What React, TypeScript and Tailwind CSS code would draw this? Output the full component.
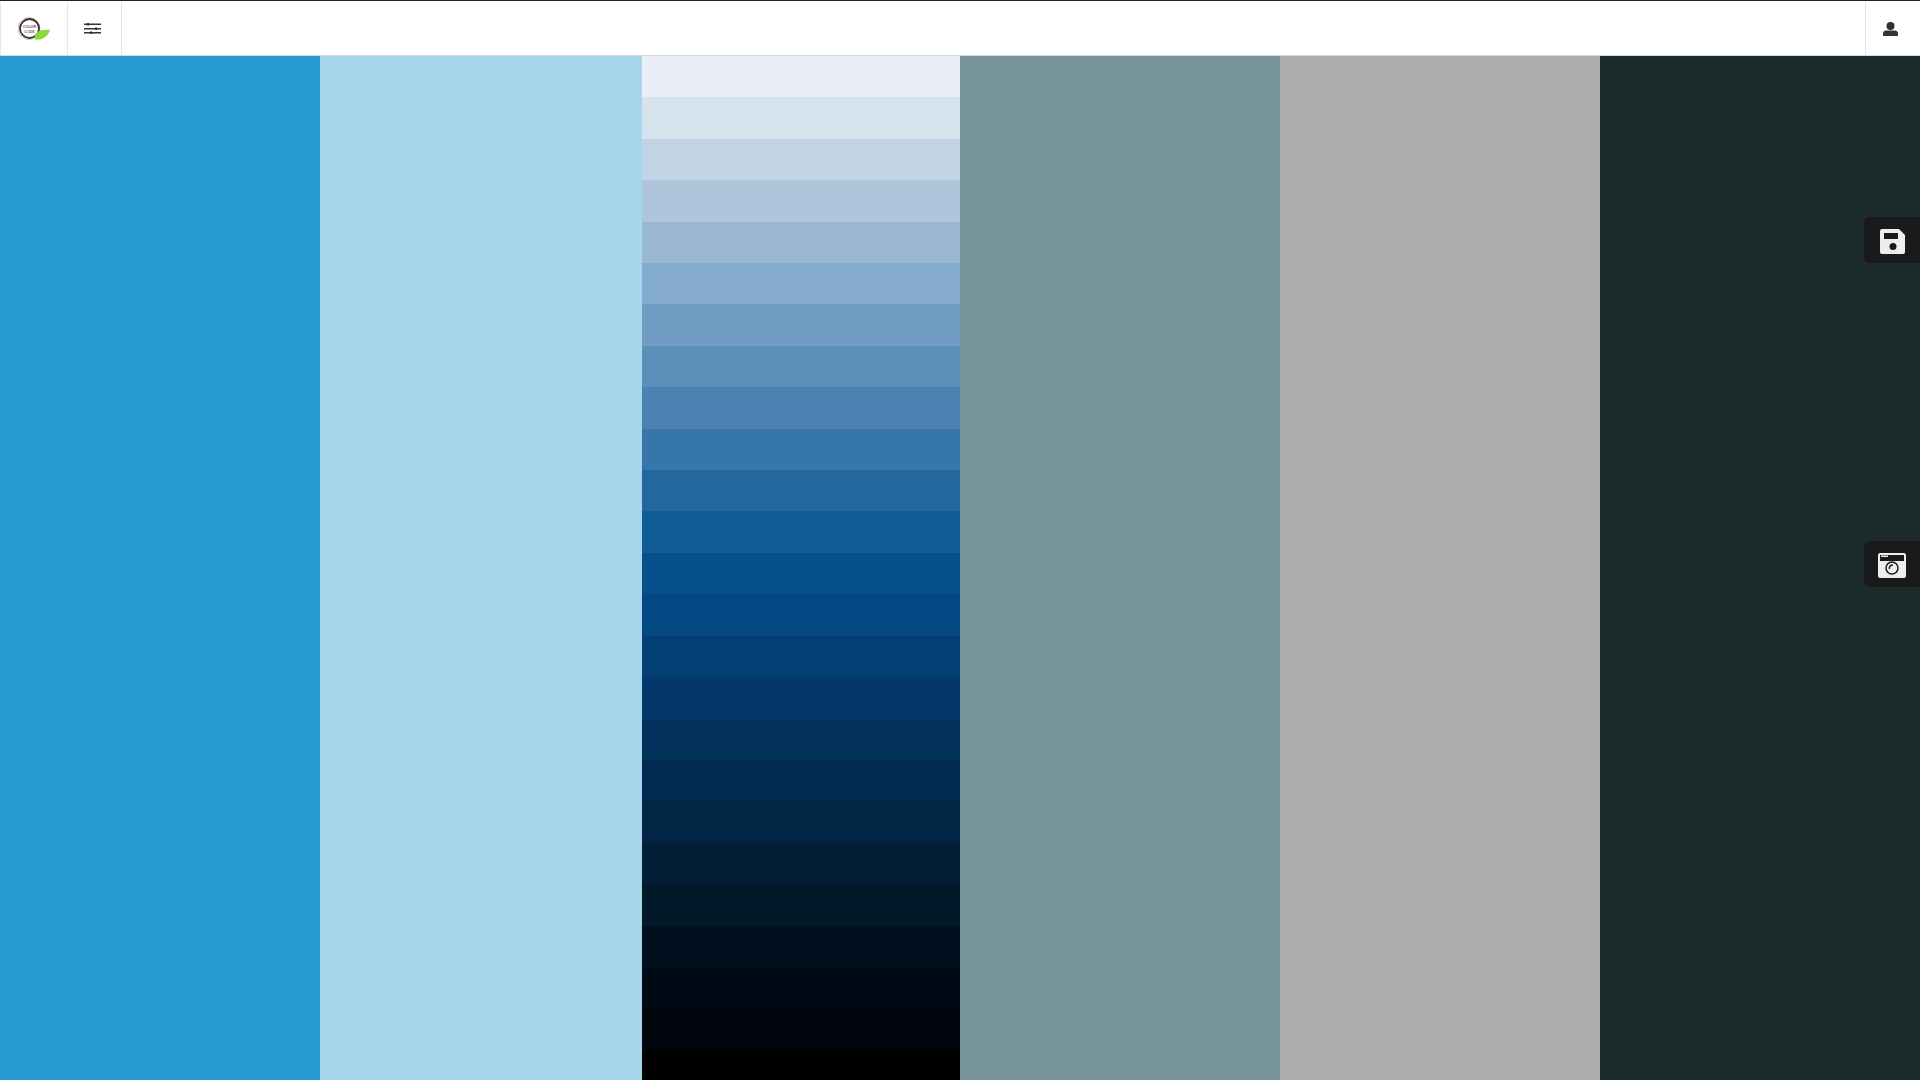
const columns = ['#2699d3', '#a6d5ec']
const rightColumns = ['#78949b', '#aeaeae', '#1c2c2c']

const shades = [
  '#eaeff7',
  '#d6e3ec',
  '#c2d4e3',
  '#afc5dc',
  '#9ab8d2',
  '#85abcc',
  '#719cc3',
  '#5c8fba',
  '#4a82b1',
  '#3776a8',
  '#22689f',
  '#0f5c97',
  '#054f8d',
  '#044984',
  '#043f75',
  '#04386a',
  '#03335d',
  '#032b52',
  '#022545',
  '#021e37',
  '#02192a',
  '#01101f',
  '#000a14',
  '#00050b',
  '#000000',
]

function Logo() {
  return (
    <svg width="32" height="23" viewBox="0 0 32 23">
      <circle cx="11" cy="11.5" r="11" fill="#fff" stroke="#c4c4c4" strokeWidth="1" />
      <circle cx="11.5" cy="11.5" r="9.5" fill="#fff" stroke="#333" strokeWidth="1.8" />
      <text x="11.5" y="10.5" textAnchor="middle" fontSize="3.6" fontWeight="700" fill="#7a4a4a" fontFamily="Liberation Sans, sans-serif">
        COLOR
      </text>
      <text x="11.5" y="15.5" textAnchor="middle" fontSize="3.6" fontWeight="700" fill="#7a5a90" fontFamily="Liberation Sans, sans-serif">
        CODE
      </text>
      <path d="M17 22.5 C15 16 21 12 32 13 C30 19 25 23.5 17 22.5 Z" fill="#8fd63a" />
    </svg>
  )
}

function Sliders() {
  return (
    <svg width="17" height="11" viewBox="0 0 17 11">
      <g fill="#333">
        <rect x="0" y="0.5" width="17" height="1.5" />
        <rect x="0" y="5" width="17" height="1.5" />
        <rect x="0" y="9" width="17" height="1.5" />
        <rect x="3" y="0" width="2" height="2.5" />
        <rect x="11" y="4.5" width="2" height="2.5" />
        <rect x="6" y="8.5" width="2" height="2.5" />
      </g>
    </svg>
  )
}

function UserIcon() {
  return (
    <svg width="15" height="14" viewBox="0 0 15 14">
      <circle cx="7.5" cy="4" r="4" fill="#333" />
      <path d="M0 14V11.5C0 9.5 1.5 8.5 3 8.5H12C13.5 8.5 15 9.5 15 11.5V14Z" fill="#333" />
    </svg>
  )
}

function Floppy() {
  return (
    <svg width="25" height="25" viewBox="0 0 25 25">
      <path d="M2 0H19L25 6V23a2 2 0 0 1-2 2H2a2 2 0 0 1-2-2V2a2 2 0 0 1 2-2Z" fill="#eeeeee" />
      <rect x="4" y="4" width="14" height="6" fill="#1a1a1a" />
      <circle cx="13" cy="17.5" r="3.5" fill="#1a1a1a" />
    </svg>
  )
}

function Snapshot() {
  return (
    <svg width="28" height="25" viewBox="0 0 28 25">
      <rect width="28" height="25" rx="2" fill="#eeeeee" />
      <path d="M2 2H26V8H2Z" fill="#1a1a1a" />
      <rect x="3" y="2.5" width="7" height="1.5" fill="#eeeeee" />
      <circle cx="14" cy="15" r="6" fill="none" stroke="#1a1a1a" strokeWidth="1.5" />
      <path d="M11.5 16 A3 3 0 0 1 15 12.2" fill="none" stroke="#1a1a1a" strokeWidth="1.5" />
    </svg>
  )
}

export default function App(): React.JSX.Element {
  return (
    <div className="relative h-[1080px] w-[1920px] overflow-hidden bg-white font-['Liberation_Sans',sans-serif]">
      <header className="flex h-[56px] items-stretch border-t border-t-[#222] border-b border-b-[#d8d8d8] bg-white pt-[1px]">
        <div className="flex w-[68px] items-center border-x border-[#e7e7e7] pl-[17px]">
          <Logo />
        </div>
        <div className="flex w-[54px] items-center justify-center border-r border-[#e7e7e7] pr-[4px]">
          <Sliders />
        </div>
        <div className="flex-1" />
        <div className="flex w-[55px] items-center justify-center border-l border-[#e7e7e7] pr-[6px]">
          <UserIcon />
        </div>
      </header>

      <main className="flex h-[1024px]">
        {columns.map((color) => (
          <div key={color} className="h-full w-[322px] first:w-[320px]" style={{ backgroundColor: color }} />
        ))}
        <div className="flex h-full w-[318px] flex-col">
          {shades.map((color) => (
            <div key={color} className="h-[41.42px] shrink-0" style={{ backgroundColor: color }} />
          ))}
        </div>
        {rightColumns.map((color) => (
          <div key={color} className="h-full w-[320px]" style={{ backgroundColor: color }} />
        ))}
      </main>

      <button className="absolute right-0 top-[217px] flex h-[46px] w-[56px] items-center justify-center rounded-l-md bg-[#1a1a1a] pt-[3px]">
        <Floppy />
      </button>
      <button className="absolute right-0 top-[541px] flex h-[46px] w-[56px] items-center justify-center rounded-l-md bg-[#1a1a1a] pt-[3px]">
        <Snapshot />
      </button>
    </div>
  )
}
